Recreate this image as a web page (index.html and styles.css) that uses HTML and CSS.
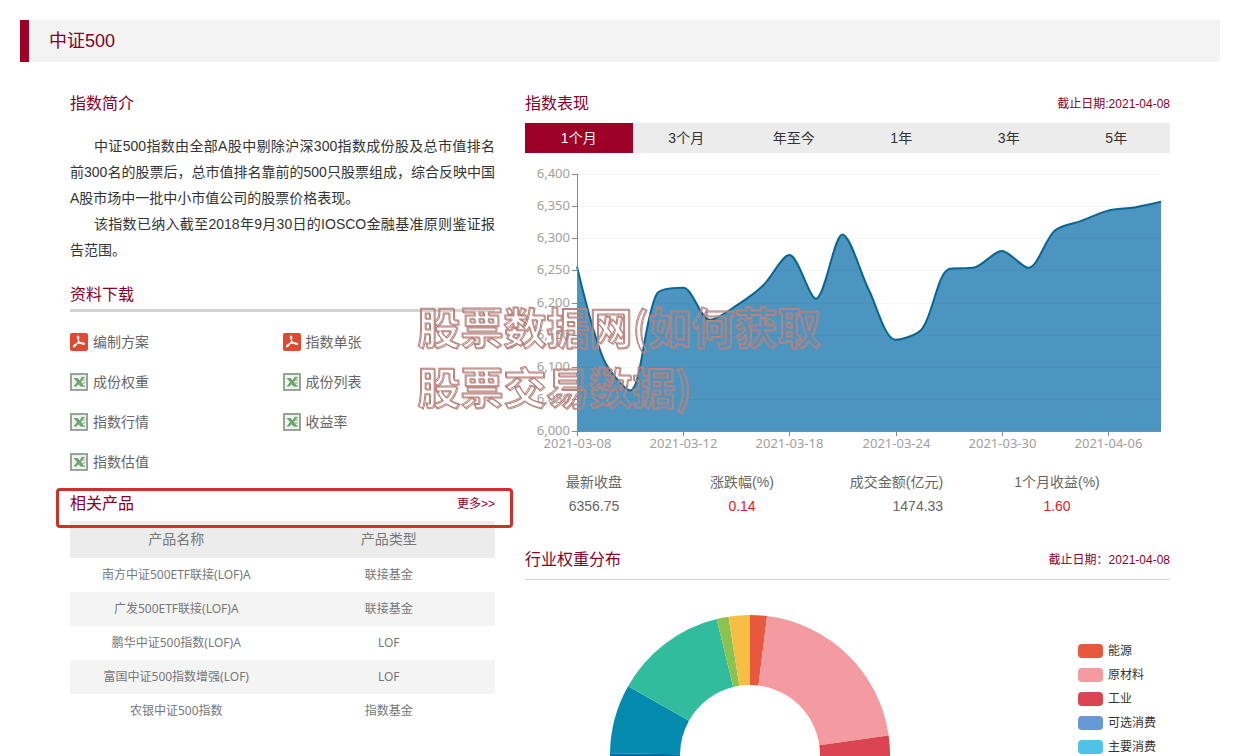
FILE: index.html
```html
<!DOCTYPE html>
<html lang="zh-CN">
<head>
<meta charset="utf-8">
<title>中证500</title>
<link rel="stylesheet" href="styles.css">
</head>
<body>
<svg class="defs" aria-hidden="true">
  <symbol id="pdf" viewBox="0 0 18 18">
    <rect width="18" height="18" rx="2" fill="#e0482f"/>
    <path d="M7.400 3.200c1.300-.4 1.500.9 1.400 2.300-.2 2.800-2 6.300-4.100 8.100-.8.700-1.700.1-1.200-.7C4.600 11.300 8.500 10 11.500 9.900c1.900-.1 3.400.4 3 1.300-.5.900-2.700-.1-4-1.300C8.800 8.300 6.600 4 7.400 3.200z" fill="none" stroke="#fff" stroke-width="1.100"/>
  </symbol>
  <symbol id="xls" viewBox="0 0 18 18">
    <rect x="1" y="1" width="16" height="16" fill="#eef3ee" stroke="#8f9b8f" stroke-width="1.800"/>
    <path d="M11 4.500h4M12 7h3M12 10h3M11 13h4" stroke="#a9c6a9" stroke-width="1.600"/>
    <path d="M3.500 5h4l2 2.200L12 4h2.500L11 9l3.500 4.500h-4l-2-2.200-2 2.200h-3L7 9z" fill="#6fa372"/>
  </symbol>
</svg>

<header class="page-head"><h1>中证500</h1></header>

<main class="columns">
  <div class="col">
    <section>
      <div class="title"><h2>指数简介</h2></div>
      <div class="intro">
        <p>中证500指数由全部A股中剔除沪深300指数成份股及总市值排名前300名的股票后，总市值排名靠前的500只股票组成，综合反映中国A股市场中一批中小市值公司的股票价格表现。</p>
        <p>该指数已纳入截至2018年9月30日的IOSCO金融基准原则鉴证报告范围。</p>
      </div>
    </section>
    <section>
      <div class="title title-thick"><h2>资料下载</h2></div>
      <ul class="downloads">
        <li><a href="#"><svg class="icon"><use href="#pdf"/></svg>编制方案</a></li>
        <li><a href="#"><svg class="icon"><use href="#pdf"/></svg>指数单张</a></li>
        <li><a href="#"><svg class="icon"><use href="#xls"/></svg>成份权重</a></li>
        <li><a href="#"><svg class="icon"><use href="#xls"/></svg>成份列表</a></li>
        <li><a href="#"><svg class="icon"><use href="#xls"/></svg>指数行情</a></li>
        <li><a href="#"><svg class="icon"><use href="#xls"/></svg>收益率</a></li>
        <li><a href="#"><svg class="icon"><use href="#xls"/></svg>指数估值</a></li>
      </ul>
    </section>
    <section class="products">
      <div class="title title-thick marked"><h2>相关产品</h2><a href="#">更多&gt;&gt;</a></div>
      <table>
        <thead><tr><th>产品名称</th><th>产品类型</th></tr></thead>
        <tbody>
          <tr><td>南方中证500ETF联接(LOF)A</td><td>联接基金</td></tr>
          <tr><td>广发500ETF联接(LOF)A</td><td>联接基金</td></tr>
          <tr><td>鹏华中证500指数(LOF)A</td><td>LOF</td></tr>
          <tr><td>富国中证500指数增强(LOF)</td><td>LOF</td></tr>
          <tr><td>农银中证500指数</td><td>指数基金</td></tr>
        </tbody>
      </table>
    </section>
  </div>

  <div class="col">
    <section>
      <div class="title"><h2>指数表现</h2><span>截止日期:2021-04-08</span></div>
      <div class="tabs">
        <button type="button" class="active">1个月</button>
        <button type="button">3个月</button>
        <button type="button">年至今</button>
        <button type="button">1年</button>
        <button type="button">3年</button>
        <button type="button">5年</button>
      </div>
      <svg class="chart" id="chart" viewBox="0 0 645 300"></svg>
      <dl class="stats">
        <div><dt>最新收盘</dt><dd>6356.75</dd></div>
        <div><dt>涨跌幅(%)</dt><dd class="up">0.14</dd></div>
        <div><dt>成交金额(亿元)</dt><dd class="end">1474.33</dd></div>
        <div><dt>1个月收益(%)</dt><dd class="up">1.60</dd></div>
      </dl>
    </section>
    <section>
      <div class="title title-thin"><h2>行业权重分布</h2><span>截止日期：2021-04-08</span></div>
      <div class="weights">
        <svg class="donut" id="donut" viewBox="-140 -140 280 280"></svg>
        <ul class="legend">
          <li class="energy">能源</li>
          <li class="material">原材料</li>
          <li class="industry">工业</li>
          <li class="optional">可选消费</li>
          <li class="staple">主要消费</li>
        </ul>
      </div>
    </section>
  </div>
</main>

<div class="watermark">股票数据网(如何获取<br>股票交易数据)</div>
<script src="charts.js"></script>
</body>
</html>
```

FILE: styles.css
```css
* { box-sizing: border-box; }
body {
  margin: 0;
  padding: 20px 16px 0 20px;
  height: 100vh;
  overflow: hidden;
  position: relative;
  background: #fff;
  color: #333;
  font: 14px/24px "Liberation Sans", "Noto Sans CJK SC", sans-serif;
}
h1, h2, p, ul, dl, dd { margin: 0; padding: 0; font-weight: 400; }
ul { list-style: none; }
a { color: inherit; text-decoration: none; }
.defs { display: none; }

.page-head {
  background: #f3f3f3;
  border-left: 9px solid #9d0026;
  padding-left: 20px;
}
.page-head h1 { font-size: 18px; line-height: 42px; color: #870028; }

.columns {
  display: grid;
  grid-template-columns: 425fr 645fr;
  gap: 30px;
  padding: 30px 50px 0;
}
.col { min-width: 0; }

.title {
  display: flex;
  justify-content: space-between;
  align-items: center;
  color: #870028;
  font-size: 12px;
  padding-bottom: 7px;
}
.title h2 { font-size: 16px; }
.title-thick { border-bottom: 3px solid #d3d3d3; padding-bottom: 2px; }
.title-thin { border-bottom: 1px solid #d3d3d3; }

.intro { padding: 10px 0 20px; line-height: 26px; text-align: justify; }
.intro p { text-indent: 24px; }

.downloads { display: grid; grid-template-columns: 1fr 1fr; padding: 10px 0; color: #666; }
.downloads a { display: flex; align-items: center; gap: 5px; height: 40px; }
.icon { width: 18px; height: 18px; }

.marked { position: relative; padding-bottom: 5px; border-color: #ececec; }
.marked::after {
  content: "";
  position: absolute;
  inset: -4px -18px -7px -14px;
  border: 3px solid #cf3029;
  border-radius: 4px;
  pointer-events: none;
}
table { width: 100%; table-layout: fixed; border-collapse: collapse; color: #777; text-align: center; }
th { height: 34px; padding: 0 0 4px; background: #ececec; font-weight: 400; }
td { height: 34px; padding: 0; font-size: 12px; font-family: "Noto Sans", "Noto Sans CJK SC", sans-serif; }
tbody tr:nth-child(even) { background: #f4f4f4; }

.tabs { display: grid; grid-template-columns: repeat(6, 1fr); background: #ececec; }
.tabs button { height: 30px; border: 0; padding: 0; background: none; color: #333; font: inherit; }
.tabs .active { background: #9d0026; color: #fff; }

.chart { display: block; width: 100%; font: 13px "Noto Sans", sans-serif; }
.chart text { fill: #a0a0a0; }
.chart .y { text-anchor: end; }
.chart .x { text-anchor: middle; }
.chart .area { fill: #4c95c0; }
.chart .line { fill: none; stroke: #0b6591; stroke-width: 2; }
.chart .grid { stroke: #000; stroke-opacity: .04; }
.chart .axis { stroke: #888; }

.stats {
  display: grid;
  grid-template-columns: 138fr 158fr 151fr 170fr 28fr;
  justify-items: center;
  padding: 17px 0 30px;
  color: #666;
  text-align: center;
}
.stats .up { color: #e01b1b; }
.stats .end { text-align: right; }

.weights { display: flex; justify-content: space-between; align-items: flex-start; padding: 35px 14px 0 85px; }
.donut { width: 280px; height: 280px; }
.legend { padding-top: 24px; font-size: 12px; }
.legend li { display: flex; align-items: center; gap: 5px; }
.legend li::before { content: ""; width: 25px; height: 14px; border-radius: 4px; background: currentColor; }
.legend .energy::before { background: #e8583d; }
.legend .material::before { background: #f39ba0; }
.legend .industry::before { background: #da4453; }
.legend .optional::before { background: #6699d3; }
.legend .staple::before { background: #4dc3e8; }

.watermark {
  position: absolute;
  left: 417px;
  top: 295px;
  font: 700 43px/60px "Noto Sans CJK SC", sans-serif;
  white-space: nowrap;
  color: transparent;
  -webkit-text-stroke: 1px #b9827c;
  filter: drop-shadow(1px 1px 0 #b9827c);
  pointer-events: none;
}
```

FILE: charts.js
```js
const NS = "http://www.w3.org/2000/svg";
function add(parent, tag, attrs, text) {
  const el = document.createElementNS(NS, tag);
  for (const k in attrs) el.setAttribute(k, attrs[k]);
  if (text) el.textContent = text;
  parent.appendChild(el);
}

// Index closing values
const closes = [6256, 6112, 6063, 6213, 6223, 6173, 6195, 6226, 6274, 6206, 6306, 6219, 6142, 6159, 6252, 6255, 6280, 6254, 6312, 6327, 6343, 6348, 6356.75];
const dates = ["2021-03-08", "2021-03-12", "2021-03-18", "2021-03-24", "2021-03-30", "2021-04-06"];
const left = 52, right = 636, top0 = 21, bottom = 278;
const step = (right - left) / (closes.length - 1);
const yOf = v => bottom - (v - 6000) / 400 * (bottom - top0);
const pts = closes.map((v, i) => [left + i * step, yOf(v)]);
const clamp = (v, a, b) => Math.min(Math.max(v, Math.min(a, b)), Math.max(a, b));

// Smooth curve whose control points stay between neighbouring values
function smooth(p) {
  const n = p.length;
  let d = "M" + p[0];
  let out = p[0];
  for (let i = 1; i < n; i++) {
    let cin = p[i], next = p[i];
    if (i < n - 1) {
      const a = p[i - 1], b = p[i], c = p[i + 1];
      const la = Math.hypot(b[0] - a[0], b[1] - a[1]);
      const lc = Math.hypot(c[0] - b[0], c[1] - b[1]);
      const r = lc / (la + lc) * 0.3;
      next = [0, 1].map(k => clamp(b[k] + (c[k] - a[k]) * r, b[k], c[k]));
      cin = [0, 1].map(k => clamp(b[k] - (next[k] - b[k]) * la / lc, a[k], b[k]));
      next = [0, 1].map(k => b[k] + (b[k] - cin[k]) * lc / la);
    }
    d += "C" + [out, cin, p[i]].join(" ");
    out = next;
  }
  return d;
}

const chart = document.getElementById("chart");
const line = smooth(pts);
for (let v = 6000; v <= 6400; v += 50) {
  const y = Math.round(yOf(v)) + 0.5;
  add(chart, "line", { class: "axis", x1: left - 5, x2: left, y1: y, y2: y });
  add(chart, "text", { class: "y", x: left - 7, y: y + 3 }, v.toLocaleString("en-US"));
}
add(chart, "path", { class: "area", d: line + "V" + bottom + "H" + left + "Z" });
for (let v = 6050; v <= 6400; v += 50) {
  const y = Math.round(yOf(v)) + 0.5;
  add(chart, "line", { class: "grid", x1: left, x2: right, y1: y, y2: y });
}
add(chart, "path", { class: "line", d: line });
add(chart, "path", { class: "axis", fill: "none", d: `M${left + 0.5} ${top0}V${bottom + 0.5}H${right}` });
dates.forEach((t, i) => {
  const x = Math.round(left + i * 4 * step) + 0.5;
  add(chart, "line", { class: "axis", x1: x, x2: x, y1: bottom, y2: bottom + 5 });
  add(chart, "text", { class: "x", x: x, y: bottom + 17 }, t);
});

// Sector weights: start angle, end angle, colour
const donut = document.getElementById("donut");
[
  [0, 7, "#e8583d"], [7, 82, "#f39ba0"], [82, 140, "#da4453"], [140, 180, "#6699d3"],
  [180, 220, "#4dc3e8"], [220, 270.7, "#0068ac"], [270.7, 299.4, "#048aac"],
  [299.4, 346.2, "#31bc9e"], [346.2, 351.2, "#8cc350"], [351.2, 360, "#f6bf43"]
].forEach(([a, b, fill]) => {
  const at = (deg, r) => [r * Math.sin(deg * Math.PI / 180), -r * Math.cos(deg * Math.PI / 180)];
  add(donut, "path", { fill, d: `M${at(a, 140)}A140 140 0 0 1 ${at(b, 140)}L${at(b, 70)}A70 70 0 0 0 ${at(a, 70)}Z` });
});
```
